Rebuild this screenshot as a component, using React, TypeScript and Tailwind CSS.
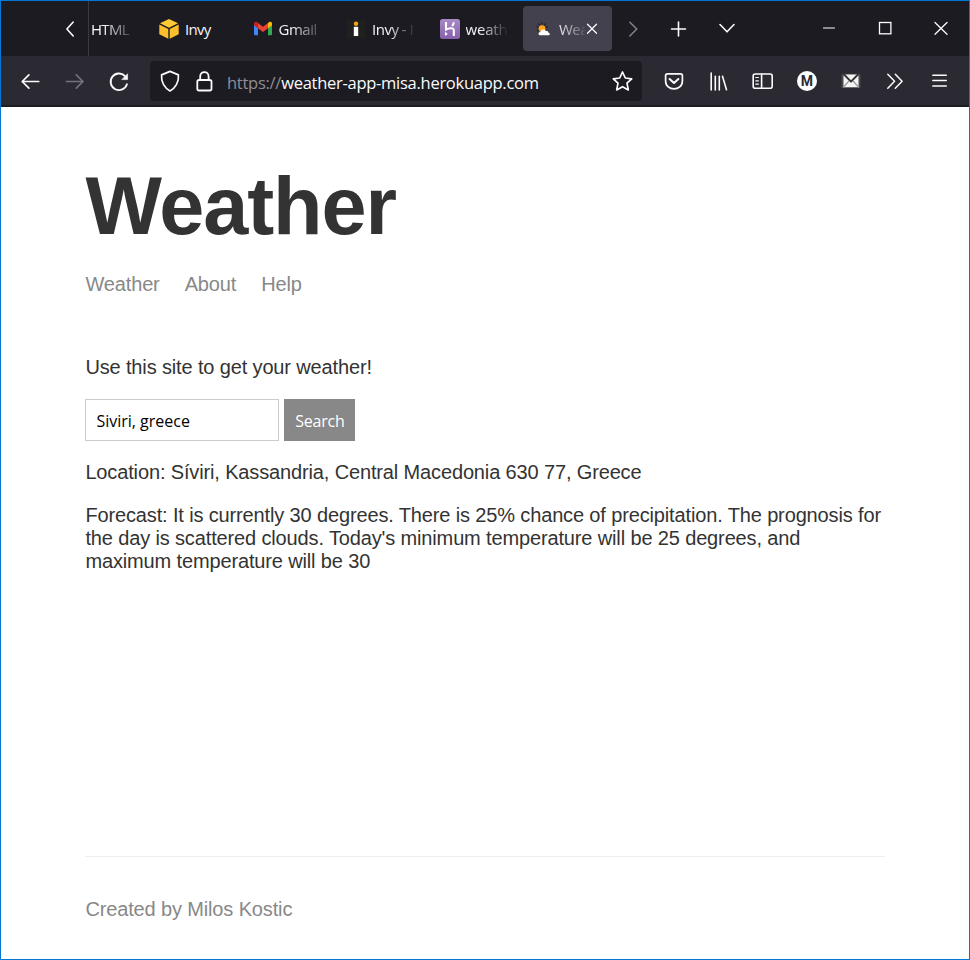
import type { ReactNode } from 'react';

const uiFont = "font-['Open_Sans','Noto_Sans',sans-serif]";

type IconProps = { w?: number; h?: number; sw?: number; className?: string; children: ReactNode };

function Icon({ w = 24, h = 24, sw = 1.7, className = '', children }: IconProps) {
  return (
    <svg
      width={w}
      height={h}
      viewBox={`0 0 ${w} ${h}`}
      fill="none"
      stroke="currentColor"
      strokeWidth={sw}
      strokeLinecap="round"
      strokeLinejoin="round"
      className={`shrink-0 ${className}`}
    >
      {children}
    </svg>
  );
}

function InvyCube() {
  return (
    <svg width="20" height="20" viewBox="0 0 20 20" className="shrink-0">
      <path d="M10 0 L19 4.2 L10 8.8 L1 4.2 Z" fill="#ffc933" />
      <path d="M0.3 5.6 L9.3 10.1 V19.8 L0.3 15.2 Z" fill="#fcbf2b" />
      <path d="M19.7 5.6 L10.7 10.1 V19.8 L19.7 15.2 Z" fill="#fcbf2b" />
    </svg>
  );
}

function GmailLogo() {
  return (
    <svg width="20" height="20" viewBox="0 0 20 20" className="shrink-0">
      <path d="M1 5.5 L5 8.4 V16.2 H2.3 Q1 16.2 1 15 Z" fill="#4285f4" />
      <path d="M19 5.5 L15 8.4 V16.2 H17.7 Q19 16.2 19 15 Z" fill="#34a853" />
      <path d="M15 4 L16.2 3.1 C17.5 2.2 19 3 19 4.5 V6.3 L15 9.3 Z" fill="#fbbc04" />
      <path d="M5 4 L10 7.8 L15 4 V9.3 L10 13 L5 9.3 Z" fill="#ea4335" />
      <path d="M1 6.3 V4.5 C1 3 2.5 2.2 3.8 3.1 L5 4 V9.3 Z" fill="#c5221f" />
    </svg>
  );
}

function InfoLogo() {
  return (
    <svg width="20" height="20" viewBox="0 0 20 20" className="shrink-0">
      <rect x="1" y="1" width="18" height="18" fill="#20201f" />
      <circle cx="10" cy="4.7" r="2.2" fill="#f6a313" />
      <path d="M7.8 7.8 H12.2 V17 H7.8 Z" fill="#fff" />
    </svg>
  );
}

function HerokuLogo() {
  return (
    <svg width="20" height="20" viewBox="0 0 20 20" className="shrink-0">
      <defs>
        <linearGradient id="heroku" x1="0" y1="0" x2="0" y2="1">
          <stop offset="0" stopColor="#a98ac6" />
          <stop offset="1" stopColor="#8660ab" />
        </linearGradient>
      </defs>
      <rect width="20" height="20" rx="2.5" fill="url(#heroku)" />
      <path d="M6 3 V10.6 C8.3 9.4 13.8 8.2 13.8 11 V17 M13.8 3.2 C13.7 4.8 13 6 12 7" fill="none" stroke="#fff" strokeWidth="2.1" />
      <path d="M5 12.8 L7.8 14.9 L5 17 Z" fill="#fff" />
    </svg>
  );
}

function WeatherLogo() {
  return (
    <svg width="20" height="20" viewBox="0 0 20 20" className="shrink-0">
      <g stroke="#1e1c22" strokeWidth="1.2" strokeLinecap="round">
        <path d="M9 3.6 V5 M5.7 4.8 L6.5 6 M12.4 4.8 L11.6 6 M3.9 8 L5.3 8.4 M14.2 8 L12.9 8.4 M4.4 11.6 L5.4 10.9" />
      </g>
      <circle cx="9" cy="9.6" r="3.4" fill="#ffa51f" />
      <path d="M7.6 16.2 C4.8 16.2 4.9 12.9 7.4 12.9 C7.5 10.2 12 9.3 13 12.2 C14.4 11.7 15.2 12.5 15.2 13.4 C17.4 13.5 17.2 16.2 15.4 16.2 Z" fill="#fff" />
    </svg>
  );
}

function Tab({ icon, title, fade, active = false }: { icon: ReactNode; title: string; fade: string; active?: boolean }) {
  return (
    <div
      className={`mr-[4.5px] flex h-[45px] w-[89px] shrink-0 items-center rounded-[4px] pl-[10px] ${
        active ? 'bg-[#42414d]' : ''
      }`}
    >
      {icon}
      <span className={`ml-[6px] overflow-hidden whitespace-nowrap text-[15px] leading-5 text-[#f4f4f8] ${fade}`}>{title}</span>
      {active && (
        <Icon w={12} h={12} sw={1.3} className="ml-[1px]">
          <path d="M1.5 1.2 L10.5 10.2 M10.5 1.2 L1.5 10.2" />
        </Icon>
      )}
    </div>
  );
}

function TabStrip() {
  return (
    <div className="flex h-[55px] items-center bg-[#1c1b22] text-[#fbfbfe]">
      <Icon sw={1.6} className="ml-[57px]">
        <path d="M15.2 5 L8.9 12 L15.2 19" />
      </Icon>
      <div className="ml-[6px] h-full w-px bg-[#3b3a42]" />
      <span className="ml-[2px] w-[58px] overflow-hidden text-[15px] leading-5 tracking-[-0.7px] [mask-image:linear-gradient(90deg,#000_12px,rgba(0,0,0,.2)_39px,transparent_42px)]">
        HTML
      </span>
      <Tab icon={<InvyCube />} title="Invy" fade="w-[44px] tracking-[-0.7px]" />
      <Tab icon={<GmailLogo />} title="Gmail" fade="w-[44px] tracking-[-0.5px] [mask-image:linear-gradient(90deg,#000_12px,rgba(0,0,0,.25)_38px,transparent_42px)]" />
      <Tab icon={<InfoLogo />} title="Invy - I" fade="w-[44px] tracking-[-0.5px] [mask-image:linear-gradient(90deg,#000_16px,rgba(0,0,0,.15)_40px,transparent_44px)]" />
      <Tab icon={<HerokuLogo />} title="weathe" fade="w-[44px] tracking-[-0.2px] [mask-image:linear-gradient(90deg,#000_14px,rgba(0,0,0,.15)_38px,transparent_42px)]" />
      <Tab active icon={<WeatherLogo />} title="Wea" fade="w-[26px] tracking-[-0.5px] [mask-image:linear-gradient(90deg,rgba(0,0,0,.9)_2px,rgba(0,0,0,.15)_25px,transparent_26px)]" />
      <Icon sw={1.5} className="ml-[4px] text-[#85848b]">
        <path d="M8.8 5.2 L15.8 12 L8.8 19" />
      </Icon>
      <Icon sw={1.6} className="ml-[21px]">
        <path d="M12.5 5 V19 M5.5 12 H19.5" />
      </Icon>
      <Icon sw={1.6} className="ml-[24px]">
        <path d="M6 7.5 L13 14.8 L20 7.5" />
      </Icon>
      <Icon sw={1.1} className="ml-[79px]">
        <path d="M6.5 11 H17.5" />
      </Icon>
      <Icon sw={1.3} className="ml-[32px]">
        <rect x="6.5" y="5.5" width="11.4" height="11.3" strokeLinejoin="miter" />
      </Icon>
      <Icon sw={1.3} className="ml-[32px]">
        <path d="M6 5.5 L18 17.2 M18 5.5 L6 17.2" />
      </Icon>
    </div>
  );
}

function Toolbar() {
  return (
    <div className="flex h-[51px] items-center border-b-2 border-[#1d1c22] bg-[#2b2a33] text-[#fbfbfe]">
      <Icon className="ml-[17px]">
        <path d="M20.7 12.5 H4.2 M10.9 5.8 L4.2 12.5 L10.9 19.2" />
      </Icon>
      <Icon className="ml-[21px] text-[#74737b]">
        <path d="M3.5 12.5 H20 M13.3 5.8 L20 12.5 L13.3 19.2" />
      </Icon>
      <Icon className="ml-[20px]" sw={1.8}>
        <path d="M19.9 15.2 A8.3 8.3 0 1 1 17.9 7" />
        <path d="M20.6 5.1 V10.6 H15.1 Z" fill="currentColor" strokeWidth="0.6" />
      </Icon>
      <div className="ml-[19px] flex h-[40px] w-[492px] items-center rounded-[4px] bg-[#1c1b22]">
        <Icon className="ml-[8px]">
          <path d="M12 2.4 L20.4 5.9 C21.2 13 17.1 19.2 12 21.9 C6.9 19.2 2.8 13 3.6 5.9 Z" />
        </Icon>
        <Icon className="ml-[10px]" sw={1.8}>
          <rect x="5.3" y="11" width="14.2" height="10.5" rx="1.8" />
          <path d="M8.2 11 V7.4 C8.2 1.6 16.6 1.6 16.6 7.4 V11" />
        </Icon>
        <span className="ml-[11px] w-[383px] whitespace-nowrap pt-[4px] text-[16.5px] leading-6 tracking-[-0.27px] text-[#8f8e96]">
          https://<span className="text-[#fbfbfe]">weather-app-misa.herokuapp.com</span>
        </span>
        <Icon>
          <path d="M12.5 3 L15.3 9 L21.7 9.8 L17 14.2 L18.3 20.9 L12.5 17.7 L6.7 20.9 L8 14.2 L3.3 9.8 L9.7 9 Z" />
        </Icon>
      </div>
      <Icon className="ml-[20px]">
        <path d="M5.5 4.8 H18.5 Q20.4 4.8 20.4 6.7 V12 C20.4 22.6 3.6 22.6 3.6 12 V6.7 Q3.6 4.8 5.5 4.8 Z" />
        <path d="M7.6 10 L12 14 L16.4 10" strokeWidth="2" />
      </Icon>
      <Icon className="ml-[20px]" sw={1.6}>
        <path d="M5.2 4 V21 M9.3 7.2 V21 M13.3 7.2 V21 M16.5 7.2 L20.5 20.8" />
      </Icon>
      <Icon className="ml-[20px]" sw={1.6}>
        <rect x="3.2" y="5" width="19" height="14.3" rx="2" />
        <path d="M11.6 5 V19.3" />
        <path d="M5.8 8.5 H8.4 M5.8 11.8 H8.4 M5.8 15.1 H8.4" strokeWidth="1.2" />
      </Icon>
      <div className="ml-[23px] flex size-5 shrink-0 items-center justify-center rounded-full bg-white font-['Roboto',sans-serif] text-[14px] font-bold leading-5 text-[#2b2a33]">
        M
      </div>
      <Icon className="ml-[22px]" sw={1}>
        <path d="M2.5 4.8 H21.5 V19 H2.5 Z" fill="#4b4a4b" stroke="none" />
        <path d="M4.5 5.5 H19.5 V18.2 H4.5 Z" fill="#f5f5f5" stroke="none" />
        <path d="M4.5 5 L12 12.6 L19.5 5" stroke="#353436" strokeWidth="2" />
        <path d="M4.5 18 L9.5 12.5 M19.5 18 L14.5 12.5" stroke="#99989a" strokeWidth="1.2" />
      </Icon>
      <Icon className="ml-[20px]" sw={1.5}>
        <path d="M4.8 5.2 L11.6 12.2 L4.8 19.2 M12.3 5.2 L19.1 12.2 L12.3 19.2" />
      </Icon>
      <Icon className="ml-[20px]" sw={1.4}>
        <path d="M5.8 6.3 H19.3 M5.8 11.5 H19.3 M5.8 17 H19.3" />
      </Icon>
    </div>
  );
}

export default function App() {
  return (
    <div className={`flex h-[960px] w-[970px] flex-col overflow-hidden border border-[#0078d7] bg-white ${uiFont}`}>
      <TabStrip />
      <Toolbar />
      <main className="ml-[84.4px] flex w-[800px] grow flex-col font-['Liberation_Sans',Arial,sans-serif] text-[20px] leading-[23px] tracking-[-0.14px] text-[#333333]">
        <h1 className="mt-[53px] text-[81px] font-bold leading-[92px] tracking-[-1.1px]">Weather</h1>
        <nav className="mt-[21px] flex gap-[25px] text-[#888888]">
          <a>Weather</a>
          <a>About</a>
          <a>Help</a>
        </nav>
        <p className="mt-[60px]">Use this site to get your weather!</p>
        <form className={`mt-[20px] flex gap-[5px] text-[16px] ${uiFont}`}>
          <input
            className="h-[42px] w-[194px] border border-[#cccccc] bg-white px-[10px] pt-[2px] tracking-[0px] text-black outline-none"
            defaultValue="Siviri, greece"
          />
          <button type="button" className="h-[42px] w-[71px] bg-[#888888] pt-[2px] tracking-[-0.2px] text-white">
            Search
          </button>
        </form>
        <p className="mt-[20px]">Location: Síviri, Kassandria, Central Macedonia 630 77, Greece</p>
        <p className="mt-[20px]">
          Forecast: It is currently 30 degrees. There is 25% chance of precipitation. The prognosis for the day is scattered
          clouds. Today's minimum temperature will be 25 degrees, and maximum temperature will be 30
        </p>
        <footer className="mb-[38px] mt-auto border-t border-[#eeeeee] pt-[41px] text-[#888888]">Created by Milos Kostic</footer>
      </main>
    </div>
  );
}
